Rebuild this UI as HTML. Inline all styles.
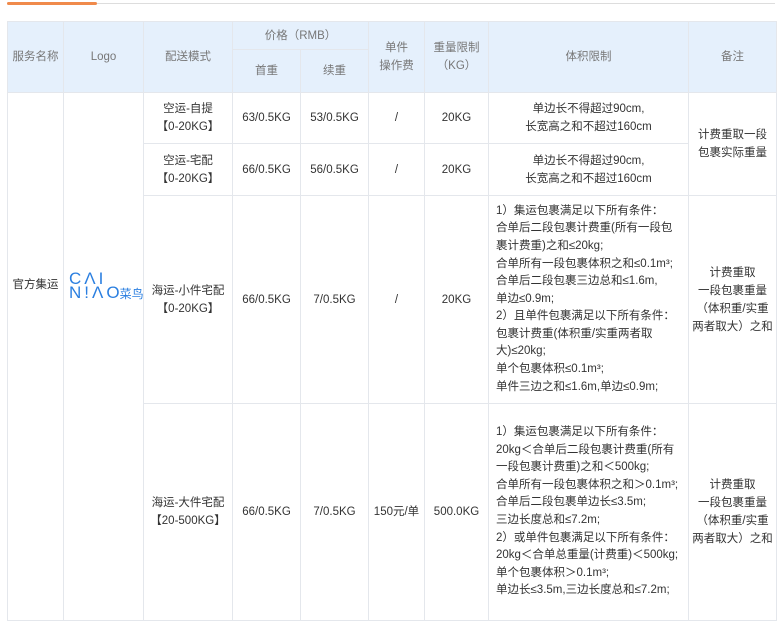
<!DOCTYPE html>
<html><head><meta charset="utf-8">
<style>
html,body{margin:0;padding:0;background:#fff;width:779px;height:628px;overflow:hidden}
body{font-family:"Liberation Sans","Noto Sans CJK SC",sans-serif;font-size:11.5px;color:#333;position:relative}
.topg{position:absolute;left:7px;top:3px;width:768px;height:1px;background:#ddd}
.topo{position:absolute;left:7px;top:2px;width:90px;height:3px;background:#f08a4b;border-radius:2px}
table{position:absolute;left:7px;top:21px;border-collapse:collapse;table-layout:fixed;width:769px}
td,th{border:1px solid #e4e7ec;text-align:center;vertical-align:middle;padding:0;line-height:18px;font-weight:normal;overflow:hidden}
th{background:#e5f0fc;color:#777;font-size:11.5px}
.l{text-align:left;padding-left:7px;line-height:17.6px;white-space:nowrap}
.top1{vertical-align:top;padding-top:183px}
.top2{vertical-align:top;padding-top:179px}
.logo{color:#2b7fe0;font-size:17px;line-height:14px;text-align:left;padding-left:5px;letter-spacing:3px;white-space:nowrap}
.logo small{font-size:12px;letter-spacing:0;margin-left:-3px}
</style></head><body>
<div class="topg"></div><div class="topo"></div>
<table>
<colgroup><col style="width:56px"><col style="width:80px"><col style="width:89px"><col style="width:68px"><col style="width:68px"><col style="width:56px"><col style="width:64px"><col style="width:200px"><col style="width:88px"></colgroup>
<tr style="height:28px"><th rowspan="2">服务名称</th><th rowspan="2">Logo</th><th rowspan="2">配送模式</th><th colspan="2">价格（RMB）</th><th rowspan="2">单件<br>操作费</th><th rowspan="2">重量限制<br>（KG）</th><th rowspan="2">体积限制</th><th rowspan="2">备注</th></tr>
<tr style="height:43px"><th>首重</th><th>续重</th></tr>
<tr style="height:51px"><td rowspan="4" class="top1">官方集运</td><td rowspan="4" class="top2"><div class="logo">CΛI<br>N!ΛO<small>菜鸟</small></div></td><td>空运-自提<br>【0-20KG】</td><td>63/0.5KG</td><td>53/0.5KG</td><td>/</td><td>20KG</td><td>单边长不得超过90cm,<br>长宽高之和不超过160cm</td><td rowspan="2">计费重取一段<br>包裹实际重量</td></tr>
<tr style="height:52px"><td>空运-宅配<br>【0-20KG】</td><td>66/0.5KG</td><td>56/0.5KG</td><td>/</td><td>20KG</td><td>单边长不得超过90cm,<br>长宽高之和不超过160cm</td></tr>
<tr style="height:208px"><td>海运-小件宅配<br>【0-20KG】</td><td>66/0.5KG</td><td>7/0.5KG</td><td>/</td><td>20KG</td><td class="l">1）集运包裹满足以下所有条件：<br>合单后二段包裹计费重(所有一段包<br>裹计费重)之和≤20kg;<br>合单所有一段包裹体积之和≤0.1m³;<br>合单后二段包裹三边总和≤1.6m,<br>单边≤0.9m;<br>2）且单件包裹满足以下所有条件：<br>包裹计费重(体积重/实重两者取<br>大)≤20kg;<br>单个包裹体积≤0.1m³;<br>单件三边之和≤1.6m,单边≤0.9m;</td><td>计费重取<br>一段包裹重量<br>（体积重/实重<br>两者取大）之和</td></tr>
<tr style="height:217px"><td>海运-大件宅配<br>【20-500KG】</td><td>66/0.5KG</td><td>7/0.5KG</td><td>150元/单</td><td>500.0KG</td><td class="l">1）集运包裹满足以下所有条件：<br>20kg＜合单后二段包裹计费重(所有<br>一段包裹计费重)之和＜500kg;<br>合单所有一段包裹体积之和＞0.1m³;<br>合单后二段包裹单边长≤3.5m;<br>三边长度总和≤7.2m;<br>2）或单件包裹满足以下所有条件：<br>20kg＜合单总重量(计费重)＜500kg;<br>单个包裹体积＞0.1m³;<br>单边长≤3.5m,三边长度总和≤7.2m;</td><td>计费重取<br>一段包裹重量<br>（体积重/实重<br>两者取大）之和</td></tr>
</table>
</body></html>
